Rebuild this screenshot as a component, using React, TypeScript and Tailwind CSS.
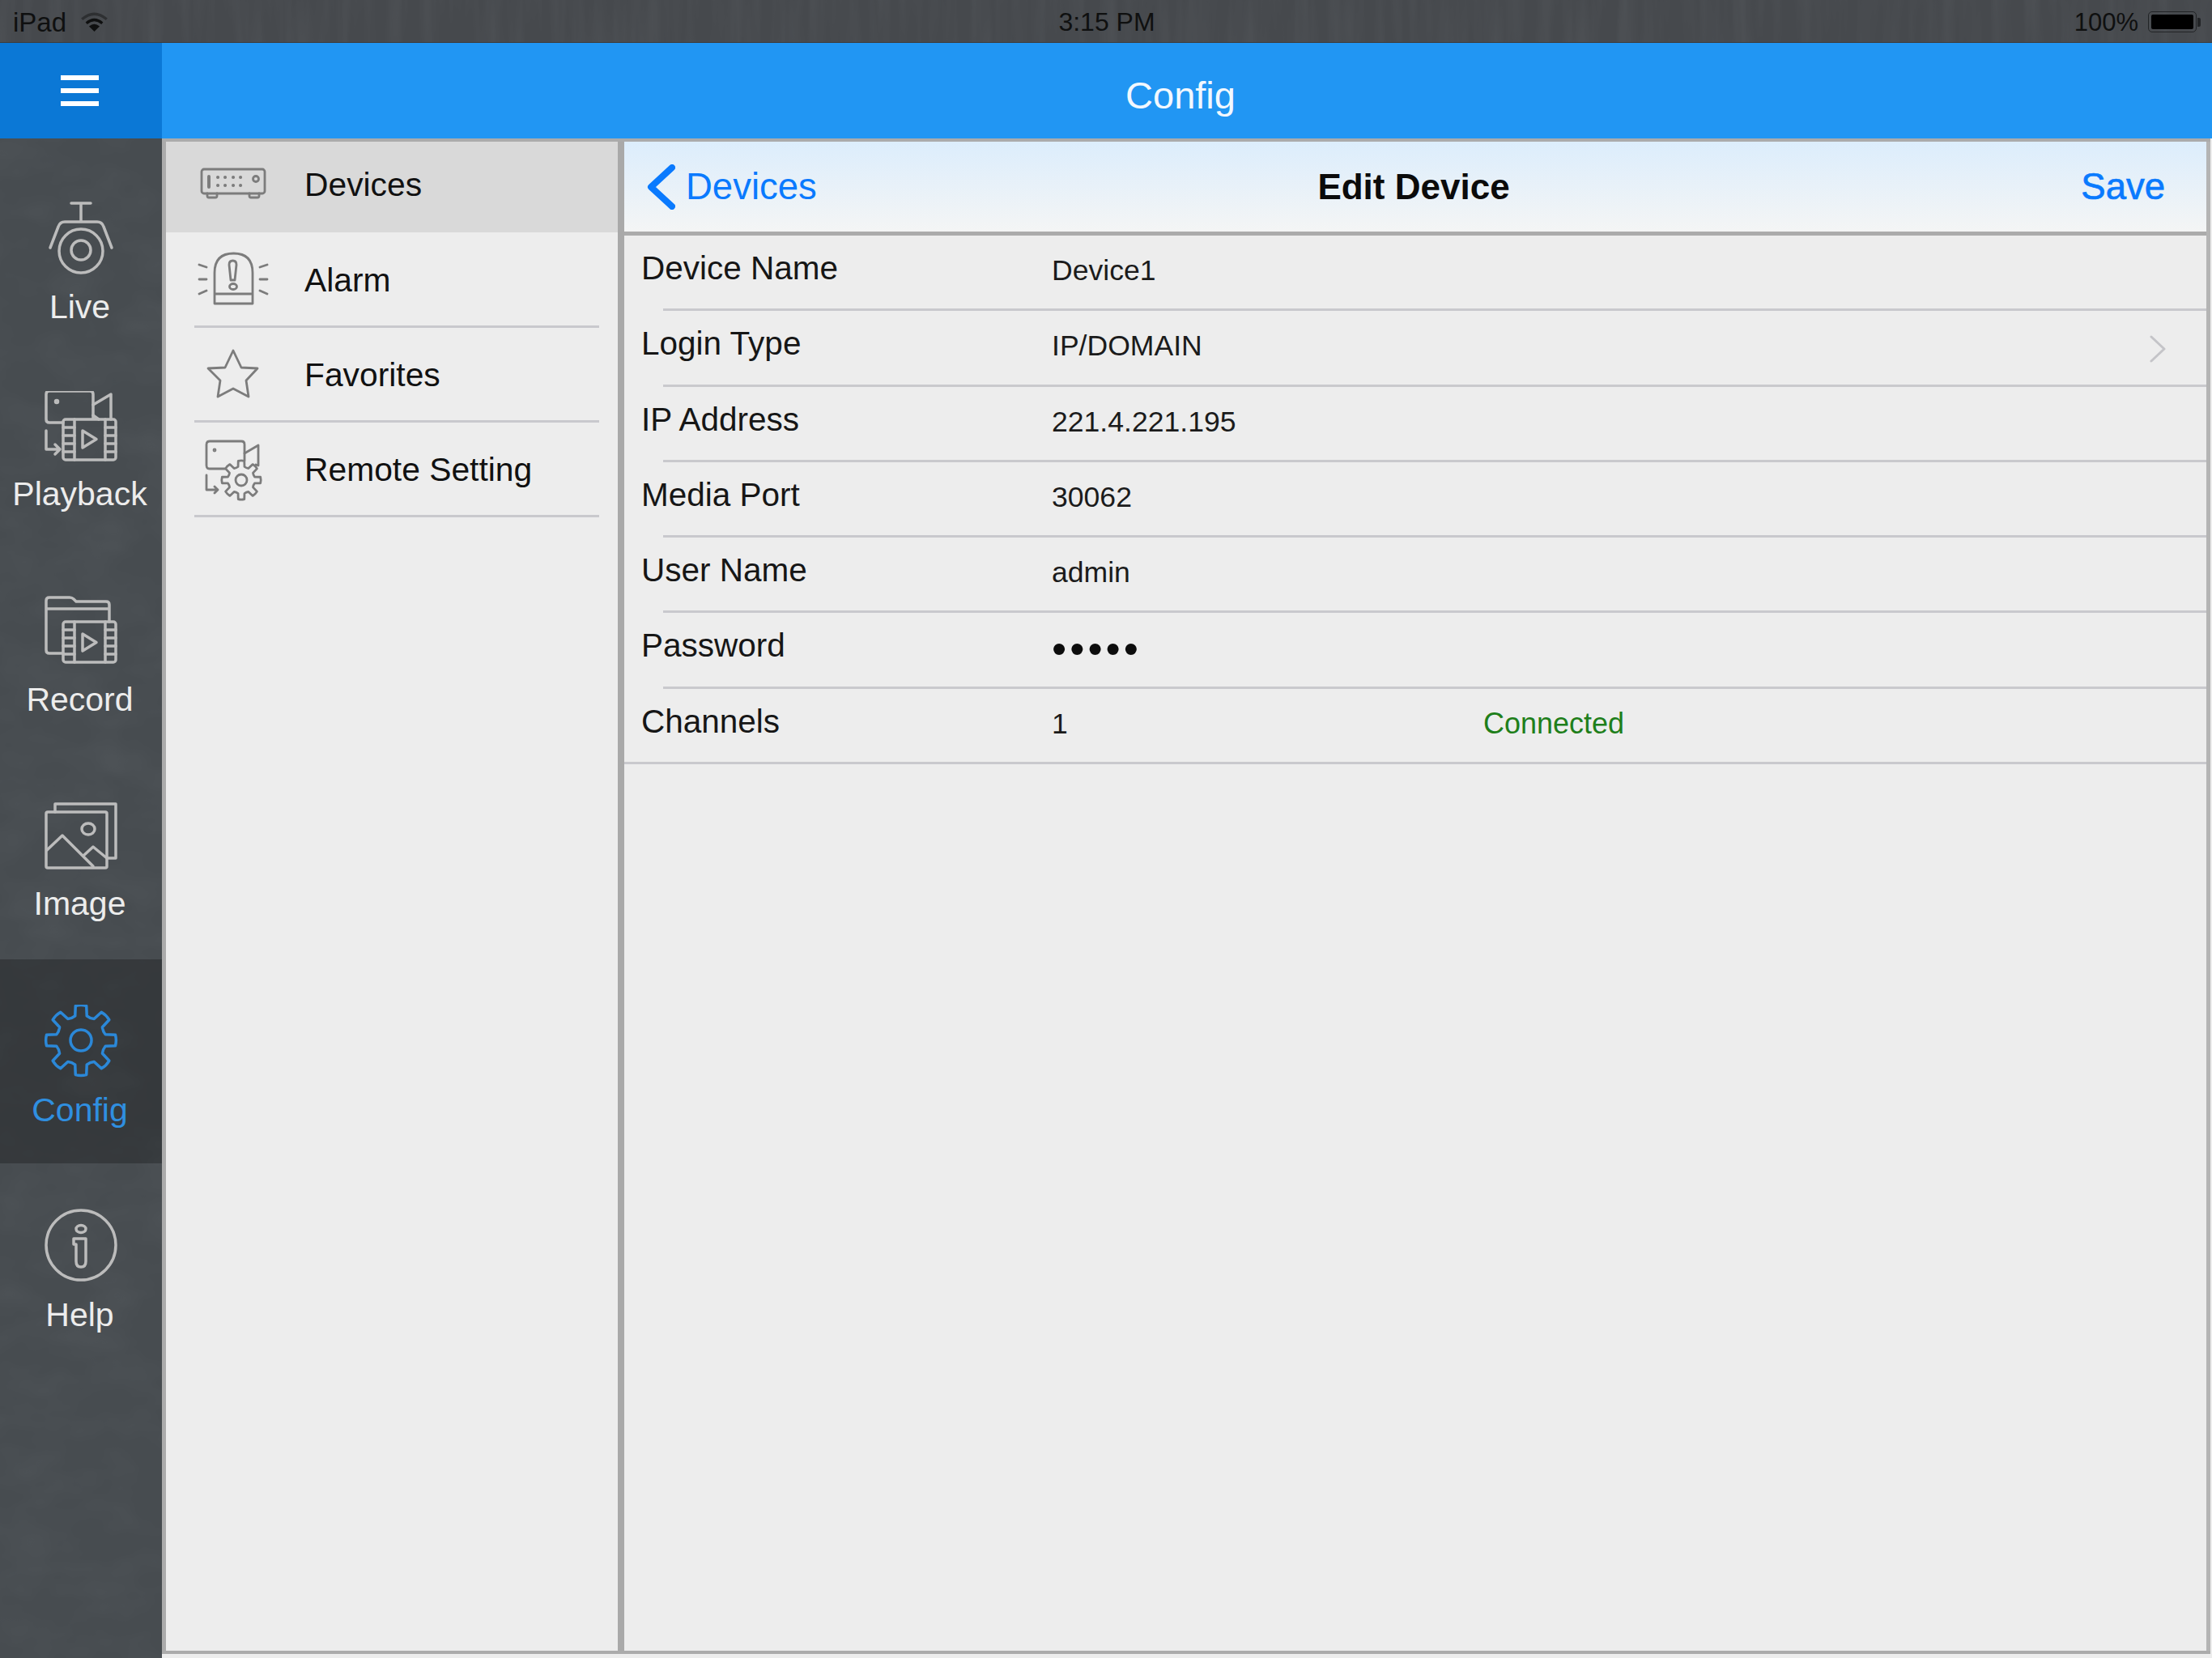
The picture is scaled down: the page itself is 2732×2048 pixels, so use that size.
import { ReactNode } from 'react';

// outline of a cog, used by the Config tab and the Remote Setting row
function gearPath(cx: number, cy: number, ro: number, ri: number, n: number) {
  const step = (Math.PI * 2) / n;
  const pt = (r: number, a: number) => `${(cx + r * Math.sin(a)).toFixed(2)} ${(cy - r * Math.cos(a)).toFixed(2)}`;
  let d = '';
  for (let i = 0; i < n; i++) {
    const a = i * step;
    d += `${i === 0 ? 'M' : 'L'}${pt(ri, a - step * 0.3)} `;
    d += `L${pt(ro, a - step * 0.2)} `;
    d += `Q${pt(ro * 1.03, a)} ${pt(ro, a + step * 0.2)} `;
    d += `L${pt(ri, a + step * 0.3)} `;
    d += `Q${pt(ri * 0.94, a + step * 0.5)} ${pt(ri, a + step * 0.7)} `;
  }
  return d + 'Z';
}

function Film({ y, h, px, py }: { y: number; h: number; px: number; py: number }) {
  const holes = [0.2, 0.4, 0.6, 0.8];
  return (
    <>
      <rect x="28" y={y} width="65" height={h} rx="3" />
      <path d={`M42 ${y}V${y + h}M80 ${y}V${y + h}`} />
      {holes.map((t) => (
        <path key={t} d={`M28 ${y + h * t}H42M80 ${y + h * t}H93`} />
      ))}
      <path d={`M${px} ${py}L${px + 17} ${py + 10.5}L${px} ${py + 21}Z`} />
    </>
  );
}

function Icon({ children, className }: { children: ReactNode; className: string }) {
  return (
    <svg viewBox="0 0 100 90" fill="none" stroke="currentColor" strokeLinecap="round" strokeLinejoin="round" className={className}>
      {children}
    </svg>
  );
}

const navIcons: Record<string, ReactNode> = {
  Live: (
    <>
      <path d="M38 2H62M50 2V24" />
      <path d="M12 57L22 31Q24 25 30 25H70Q76 25 78 31L88 57" />
      <circle cx="50" cy="61" r="27" />
      <circle cx="50" cy="60" r="12" />
    </>
  ),
  Playback: (
    <>
      <path d="M28 39H11Q7 39 7 35V4Q7 0 11 0H61Q65 0 65 4V34" />
      <path d="M65 17L87 4V35M65 30L72 35" />
      <circle cx="20" cy="13" r="1.5" />
      <path d="M7 49V72H24M18 66L24 72L18 78" />
      <Film y={35} h={50} px={52} py={49} />
    </>
  ),
  Record: (
    <>
      <path d="M28 71H11Q7 71 7 67V6Q7 2 11 2H36Q39 2 41 4L44 7H81Q85 7 85 11V32M7 16H85" />
      <Film y={32} h={50} px={52} py={47} />
    </>
  ),
  Image: (
    <>
      <rect x="7" y="15" width="75" height="69" rx="2" />
      <path d="M18 15V5H93V72H82" />
      <ellipse cx="59" cy="36" rx="8" ry="7" />
      <path d="M8 62L27 44L65 82M53 69L65 58L82 72" />
    </>
  ),
  Config: (
    <>
      <path d={gearPath(50, 44, 43, 31, 8)} />
      <circle cx="50" cy="44" r="13" />
    </>
  ),
  Help: (
    <>
      <circle cx="50" cy="45" r="43" />
      <ellipse cx="50" cy="25" rx="6" ry="4.5" />
      <path d="M41 37H56V65Q56 72 50 72Q44 72 44 65V44H41Z" />
    </>
  ),
};

const menuIcons: Record<string, ReactNode> = {
  Devices: (
    <>
      <rect x="9" y="23" width="78" height="30" rx="3" />
      <path d="M16 53V56Q16 58 18 58H26Q28 58 28 56V53M68 53V56Q68 58 70 58H78Q80 58 80 56V53" />
      <path d="M18 32V45" strokeWidth="4" />
      <path d="M29 33H29.1M38 33H38.1M48 33H48.1M57 33H57.1M29 43H29.1M38 43H38.1M48 43H48.1M57 43H57.1" strokeWidth="4" />
      <circle cx="76" cy="35" r="3.5" />
    </>
  ),
  Alarm: (
    <>
      <path d="M25 74V36Q25 12 48.5 12Q72 12 72 36V74ZM25 62H72" />
      <path d="M43 26Q43 21 47.5 21Q52 21 52 26L50 45H45Z" />
      <ellipse cx="48" cy="53" rx="4.5" ry="3.5" />
      <path d="M6 26L15 29M6 44H15M6 62L15 58M81 29L90 26M81 44H90M81 58L90 62" />
    </>
  ),
  Favorites: <path d="M48 14L58 35L78 36L64 51L67 71L48 61L29 71L32 51L17 36L38 35Z" />,
  'Remote Setting': (
    <>
      <path d="M38 43H19Q15 43 15 39V13Q15 9 19 9H58Q62 9 62 13V33" />
      <path d="M62 24L79 14V39L76 38" />
      <circle cx="25" cy="20" r="1" />
      <path d="M15 51V69H29M25 65L29 69L25 73" />
      <path d={gearPath(58, 57, 24, 17, 8)} fill="#ededed" />
      <circle cx="58" cy="57" r="7" />
    </>
  ),
};

const navItems = [
  { name: 'Live', h: 'h-[234px]', mt: 'mt-[17px]' },
  { name: 'Playback', h: 'h-[253px]', mt: 'mt-[14px]' },
  { name: 'Record', h: 'h-[252px]', mt: 'mt-[15px]' },
  { name: 'Image', h: 'h-[253px]', mt: 'mt-[15px]' },
  { name: 'Config', h: 'h-[252px]', mt: 'mt-[17px]', active: true },
  { name: 'Help', h: 'h-[253px]', mt: 'mt-[18px]' },
];

const menuItems = [
  { name: 'Devices', row: 'h-[112px] bg-[#d9d9d9] pl-[35px]' },
  { name: 'Alarm', row: 'h-[118px] pt-[3px] ml-[35px] mr-[23px] border-b-[3px] border-[#c9c9cd]' },
  { name: 'Favorites', row: 'h-[117px] pt-[3px] ml-[35px] mr-[23px] border-b-[3px] border-[#c9c9cd]' },
  { name: 'Remote Setting', row: 'h-[117px] pt-[3px] ml-[35px] mr-[23px] border-b-[3px] border-[#c9c9cd]' },
];

const fields = [
  { label: 'Device Name', value: 'Device1' },
  { label: 'Login Type', value: 'IP/DOMAIN', chevron: true },
  { label: 'IP Address', value: '221.4.221.195' },
  { label: 'Media Port', value: '30062' },
  { label: 'User Name', value: 'admin' },
  { label: 'Password', value: '•••••', secret: true },
  { label: 'Channels', value: '1', status: 'Connected' },
];

function Texture({ id, freq, opacity }: { id: string; freq: string; opacity: number }) {
  return (
    <svg className="absolute inset-0 h-full w-full pointer-events-none">
      <filter id={id}>
        <feTurbulence type="fractalNoise" baseFrequency={freq} numOctaves={3} seed={4} />
        <feColorMatrix values="0 0 0 0 0.62  0 0 0 0 0.66  0 0 0 0 0.7  1.1 0 0 0 -0.42" />
      </filter>
      <rect width="100%" height="100%" filter={`url(#${id})`} opacity={opacity} />
    </svg>
  );
}

function StatusBar() {
  return (
    <div className="relative flex h-[53px] shrink-0 items-center justify-between border-b border-[#3c3d3e] bg-[#46494d] pl-[16px] pr-[14px] pt-[2px] text-[32px] leading-none text-[#0f1010]">
      <Texture id="status-noise" freq="0.05 0.004" opacity={0.1} />
      <div className="relative flex w-[400px] items-center gap-[18px]">
        <span className="text-[33px]">iPad</span>
        <svg viewBox="0 0 30 22" className="h-[24px] w-[33px]" fill="none" stroke="#0f1010" strokeWidth="3">
          <path d="M1 8Q15 -4 29 8" opacity="0.45" />
          <path d="M6 12.5Q15 5 24 12.5" />
          <path d="M15 22L9 16Q15 11 21 16Z" fill="#0f1010" stroke="none" />
        </svg>
      </div>
      <span className="relative">3:15 PM</span>
      <div className="relative flex w-[400px] items-center justify-end gap-[12px]">
        <span className="text-[31px]">100%</span>
        <div className="flex items-center">
          <div className="h-[26px] w-[60px] rounded-[5px] border border-[#222426] p-[3px]">
            <div className="h-full w-full rounded-[2px] bg-black" />
          </div>
          <div className="ml-[1px] h-[11px] w-[4px] rounded-r-[2px] bg-[#222426]" />
        </div>
      </div>
    </div>
  );
}

function NavBar() {
  return (
    <div className="flex h-[118px] shrink-0 bg-[#2196f3]">
      <div className="flex w-[200px] flex-col items-center justify-center gap-[10px] bg-[#0b78d6] pr-[3px]">
        <div className="h-[6px] w-[47px] bg-white" />
        <div className="h-[6px] w-[47px] bg-white" />
        <div className="h-[6px] w-[47px] bg-white" />
      </div>
      <div className="flex-1 pr-[16px] pt-[12px] text-center text-[47px] leading-[106px] text-[#f2f8fe]">Config</div>
    </div>
  );
}

function Sidebar() {
  return (
    <div className="relative w-[200px] shrink-0 bg-[#474c50] pt-[22px]">
      <Texture id="side-noise" freq="0.012 0.02" opacity={0.08} />
      {navItems.map((item) => (
        <div key={item.name} className={`relative flex flex-col items-center pt-[56px] ${item.h} ${item.active ? 'bg-black/25 text-[#2b88d8]' : 'text-[#bcbcbc]'}`}>
          <Icon className="h-[90px] w-[100px] shrink-0 stroke-[3.5px]">{navIcons[item.name]}</Icon>
          <div className={`${item.mt} pr-[3px] text-[41px] leading-[46px] ${item.active ? 'text-[#2f8fe0]' : 'text-[#ececec]'}`}>{item.name}</div>
        </div>
      ))}
    </div>
  );
}

function Menu() {
  return (
    <div className="w-[566px] shrink-0 border-r-[8px] border-[#a9a9a9]">
      {menuItems.map((item, i) => (
        <div key={item.name} className={`flex items-center ${item.row}`}>
          <Icon className="h-[90px] w-[100px] shrink-0 stroke-[2.8px] text-[#7c7c7c]">{menuIcons[item.name]}</Icon>
          <span className={`ml-[36px] text-[40.8px] leading-none text-[#111] ${i === 0 ? 'mb-[6px]' : ''}`}>{item.name}</span>
        </div>
      ))}
    </div>
  );
}

function Detail() {
  return (
    <div className="min-w-0 flex-1 border-r-[5px] border-[#b4b4b4]">
      <div className="flex h-[116px] items-center justify-between border-b-[5px] border-[#ababab] bg-gradient-to-b from-[#dcedfc] to-[#f4f5f5] pl-[27px] pr-[51px] text-[45.5px] leading-none">
        <div className="flex w-[310px] items-center text-[#0a7afe]">
          <svg viewBox="0 0 36 56" className="h-[56px] w-[36px]" fill="none" stroke="#0a7afe" strokeWidth="8" strokeLinecap="round" strokeLinejoin="round">
            <path d="M32 4L6 28L32 52" />
          </svg>
          <span className="ml-[13px]">Devices</span>
        </div>
        <span className="text-[44px] font-bold text-[#0b0b0b]">Edit Device</span>
        <span className="w-[290px] text-right text-[#0a7afe] [-webkit-text-stroke:0.7px_#0a7afe]">Save</span>
      </div>
      {fields.map((f, i) => (
        <div key={f.label} className={`flex h-[93.3px] border-b-[3px] border-[#c9c9cd] ${i === fields.length - 1 ? '' : 'ml-[48px]'}`}>
          <div className={`relative flex flex-1 items-start pr-[50px] pt-[17px] ${i === fields.length - 1 ? 'pl-[21px]' : '-ml-[27px]'}`}>
            <span className="w-[507px] shrink-0 text-[40.5px] leading-[46px] text-[#161616]">{f.label}</span>
            {f.secret ? (
              <span className="mt-[4px] text-[52px] leading-[46px] tracking-[4px] text-[#0c0c0c]">{f.value}</span>
            ) : (
              <span className="mt-[5px] text-[35.6px] leading-[42px] text-[#1b1b1b]">{f.value}</span>
            )}
            {f.status && <span className="absolute left-[1061px] top-[22px] text-[36px] leading-[42px] text-[#1f7f1b]">{f.status}</span>}
            {f.chevron && (
              <svg viewBox="0 0 20 34" className="absolute right-[50px] top-[30px] h-[34px] w-[20px]" fill="none" stroke="#c4c4c8" strokeWidth="3" strokeLinecap="round" strokeLinejoin="round">
                <path d="M2 2L18 17L2 32" />
              </svg>
            )}
          </div>
        </div>
      ))}
    </div>
  );
}

export default function App() {
  return (
    <div className="flex h-screen w-screen flex-col overflow-hidden bg-[#ededed] font-['Liberation_Sans',sans-serif]">
      <StatusBar />
      <NavBar />
      <div className="flex min-h-0 flex-1">
        <Sidebar />
        <div className="min-w-0 flex-1 pb-[5px] pr-[2px]">
          <div className="flex h-full border-b-[4px] border-l-[5px] border-t-[4px] border-[#ababab]">
            <Menu />
            <Detail />
          </div>
        </div>
      </div>
    </div>
  );
}
